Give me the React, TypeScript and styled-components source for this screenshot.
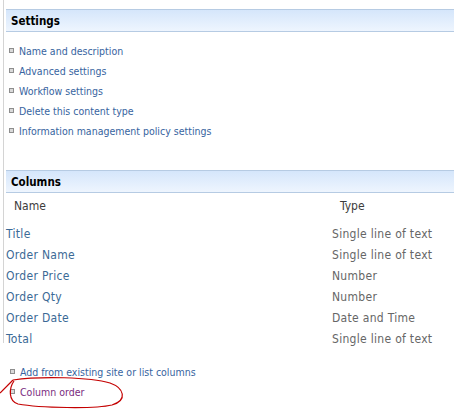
import React from "react";
import styled, { createGlobalStyle } from "styled-components";

const Global = createGlobalStyle`
  html, body { margin: 0; padding: 0; background: #fff; }
  body { font-family: "DejaVu Sans Condensed", "DejaVu Sans", sans-serif; }
`;

const Page = styled.div`
  position: relative;
  width: 454px;
  height: 409px;
  overflow: hidden;
`;

const Main = styled.div`
  margin-left: 3px;
  border-left: 1px solid #d4d4d4;
  padding: 9px 0 0 2px;
  height: 334px;
`;

const SectionHeader = styled.div<{ $mt?: number }>`
  margin-top: ${(p) => p.$mt ?? 0}px;
  height: 21px;
  border-top: 1px solid #b6cbe3;
  border-bottom: 1px solid #b6cbe3;
  background: linear-gradient(to bottom, #d5e6fb, #eef5fe);
  display: flex;
  align-items: center;
  padding-left: 5px;
  font-family: "DejaVu Sans Condensed", "DejaVu Sans", sans-serif;
  font-weight: bold;
  font-size: 11.5px;
  color: #000;
`;

const LinkList = styled.ul<{ $pt: number; $pl: number }>`
  list-style: none;
  margin: 0;
  padding: ${(p) => p.$pt}px 0 0 ${(p) => p.$pl}px;
`;

const LinkItem = styled.li<{ $visited?: boolean }>`
  height: 20px;
  display: flex;
  align-items: center;
  gap: 5px;
  font-size: 10.5px;
  color: ${(p) => (p.$visited ? "#7a2c7e" : "#3764a0")};
`;

const Bullet = styled.span`
  width: 3px;
  height: 3px;
  border: 1px solid #8e8e8e;
  background: #d9d9d9;
  flex: none;
  margin-top: -2px;
`;

const Table = styled.div`
  display: grid;
  grid-template-columns: 326px 1fr;
  font-size: 12px;
`;

const HeadCell = styled.div<{ $pl: number }>`
  height: 30px;
  display: flex;
  align-items: center;
  padding-left: ${(p) => p.$pl}px;
  color: #3c3c3c;
  padding-bottom: 4px;
  box-sizing: border-box;
`;

const Cell = styled.div<{ $kind: "name" | "type" }>`
  height: 21px;
  display: flex;
  align-items: center;
  color: ${(p) => (p.$kind === "name" ? "#3b6a96" : "#666")};
  letter-spacing: 0.3px;
`;

const Scribble = styled.svg`
  position: absolute;
  left: 0;
  top: 370px;
  pointer-events: none;
`;

const settings = [
  "Name and description",
  "Advanced settings",
  "Workflow settings",
  "Delete this content type",
  "Information management policy settings",
];

const columns: [string, string][] = [
  ["Title", "Single line of text"],
  ["Order Name", "Single line of text"],
  ["Order Price", "Number"],
  ["Order Qty", "Number"],
  ["Order Date", "Date and Time"],
  ["Total", "Single line of text"],
];

export default function App() {
  return (
    <Page>
      <Global />
      <Main>
        <SectionHeader>Settings</SectionHeader>
        <LinkList $pt={9} $pl={3}>
          {settings.map((s) => (
            <LinkItem key={s}>
              <Bullet />
              {s}
            </LinkItem>
          ))}
        </LinkList>
        <SectionHeader $mt={29}>Columns</SectionHeader>
        <Table>
          <HeadCell $pl={8}>Name</HeadCell>
          <HeadCell $pl={8}>Type</HeadCell>
          {columns.map(([n, t]) => (
            <React.Fragment key={n}>
              <Cell $kind="name">{n}</Cell>
              <Cell $kind="type">{t}</Cell>
            </React.Fragment>
          ))}
        </Table>
      </Main>
      <LinkList $pt={19} $pl={10}>
        <LinkItem>
          <Bullet />
          Add from existing site or list columns
        </LinkItem>
        <LinkItem $visited>
          <Bullet />
          Column order
        </LinkItem>
      </LinkList>
      <Scribble width="140" height="39" viewBox="0 370 140 39">
        <path
          d="M 13 380 C 40 376, 90 377, 110 383 C 124 388, 128 400, 112 405 C 95 409, 40 408, 18 404 C 8 401, 9 388, 14 381"
          fill="none"
          stroke="#c40000"
          strokeWidth="1.2"
        />
        <path d="M 0 393 L 13 380" fill="none" stroke="#c40000" strokeWidth="1.2" />
      </Scribble>
    </Page>
  );
}
